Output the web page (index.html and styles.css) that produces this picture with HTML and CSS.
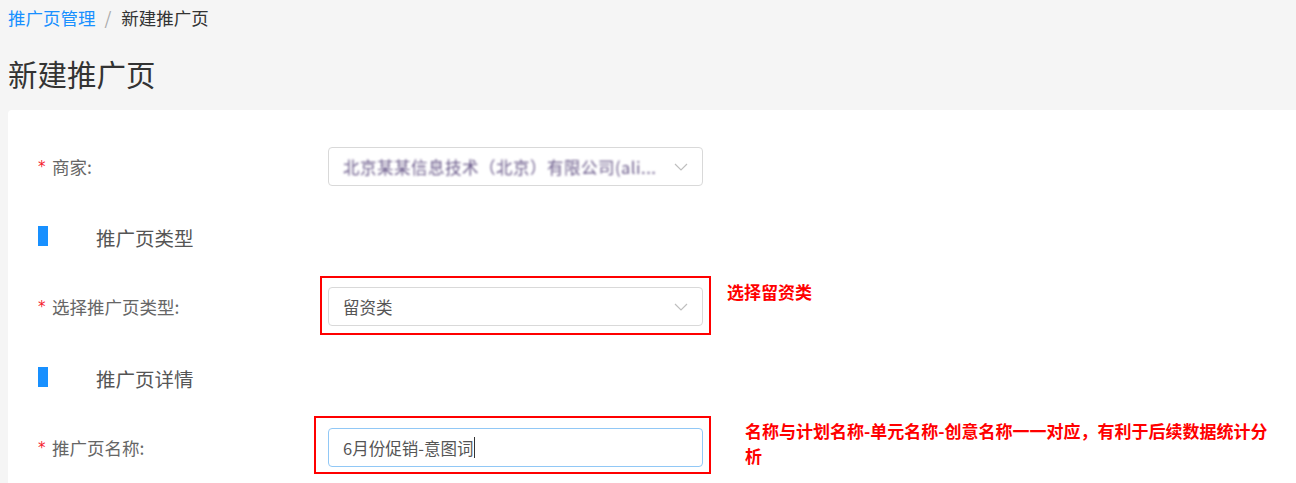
FILE: index.html
```html
<!DOCTYPE html>
<html lang="zh-CN">
<head>
  <meta charset="UTF-8">
  <title>新建推广页</title>
  <link rel="stylesheet" href="styles.css">
</head>
<body>

  <div class="breadcrumb">
    <a class="crumb-link">推广页管理</a>
    <span class="crumb-sep">/</span>
    <span class="crumb-current">新建推广页</span>
  </div>

  <h1 class="page-title">新建推广页</h1>

  <div class="card">

    <div class="form-row">
      <label class="form-label"><span class="req">*</span>商家:</label>
      <div class="control">
        <div class="select">
          <span class="select-value masked">北京某某信息技术（北京）有限公司(ali...</span>
          <svg class="arrow" width="14" height="8" viewBox="0 0 14 8"><path d="M1 1 L7 7 L13 1" fill="none" stroke="#bfbfbf" stroke-width="1.2"/></svg>
        </div>
      </div>
    </div>

    <div class="section-title"><span class="section-bar"></span><span class="section-text">推广页类型</span></div>

    <div class="form-row">
      <label class="form-label"><span class="req">*</span>选择推广页类型:</label>
      <div class="control">
        <div class="select">
          <span class="select-value">留资类</span>
          <svg class="arrow" width="14" height="8" viewBox="0 0 14 8"><path d="M1 1 L7 7 L13 1" fill="none" stroke="#bfbfbf" stroke-width="1.2"/></svg>
        </div>
        <div class="mark mark-type"></div>
        <div class="note note-type">选择留资类</div>
      </div>
    </div>

    <div class="section-title"><span class="section-bar"></span><span class="section-text">推广页详情</span></div>

    <div class="form-row">
      <label class="form-label"><span class="req">*</span>推广页名称:</label>
      <div class="control">
        <div class="input focused"><span class="input-value">6月份促销-意图词</span><span class="caret"></span></div>
        <div class="mark mark-name"></div>
        <div class="note note-name">名称与计划名称-单元名称-创意名称一一对应，有利于后续数据统计分析</div>
      </div>
    </div>

  </div>

</body>
</html>
```

FILE: styles.css
```css
html, body {
  margin: 0;
  padding: 0;
  height: 100%;
  overflow: hidden;
}
body {
  font-family: "Noto Sans CJK SC", "Noto Sans", sans-serif;
  background: #f5f5f5;
  color: #333;
}

.breadcrumb {
  padding: 8px 8px 0;
  font-size: 17.5px;
  line-height: 20px;
  height: 20px;
}
.crumb-link {
  color: #1890ff;
}
.crumb-sep {
  color: #aaa;
  margin: 0 6px 0 5px;
}
.crumb-current {
  color: #333;
}

.page-title {
  margin: 0;
  padding: 25px 8px 0;
  font-size: 29.5px;
  font-weight: normal;
  line-height: 40px;
  height: 40px;
  color: #333;
}

.card {
  margin: 17px 0 0 8px;
  padding: 37px 0 0 30px;
  background: #fff;
  border-radius: 4px 0 0 0;
  height: 336px;
}

.form-row {
  display: flex;
  align-items: center;
  height: 39px;
  margin-bottom: 41px;
}
.form-row:first-child {
  margin-bottom: 40px;
}
.form-row:last-child {
  margin-bottom: 0;
}
.form-label {
  width: 290px;
  font-size: 17.5px;
  color: #666;
  display: flex;
  align-items: center;
}
.req {
  color: #f5222d;
  font-size: 15px;
  width: 14px;
  font-family: "DejaVu Sans", sans-serif;
}

.control {
  position: relative;
  width: 375px;
  height: 39px;
}
.select, .input {
  box-sizing: border-box;
  height: 39px;
  border: 1px solid #d9d9d9;
  border-radius: 4px;
  display: flex;
  align-items: center;
  padding: 0 14px;
  font-size: 16.5px;
  color: #555;
  background: #fff;
}
.select-value {
  flex: 1;
  white-space: nowrap;
  overflow: hidden;
}
.masked {
  color: #6a5a8a;
  filter: blur(0.8px);
  letter-spacing: 0.5px;
}
.arrow {
  margin-left: 8px;
}
.input.focused {
  border-color: #91c8f6;
}
.caret {
  display: inline-block;
  width: 1px;
  height: 21px;
  background: #333;
  margin-left: 1px;
}

.section-title {
  display: flex;
  align-items: center;
  height: 20px;
  line-height: 20px;
  margin-bottom: 41px;
  font-size: 19.5px;
  color: #555;
}
.section-bar {
  width: 10px;
  height: 20px;
  background: #1890ff;
  margin-right: 48px;
}
.section-text {
  padding-top: 3px;
}

.mark {
  position: absolute;
  border: 2px solid #ff0000;
  box-sizing: border-box;
}
.mark-type {
  left: -8px;
  top: -11px;
  width: 391px;
  height: 59px;
}
.mark-name {
  left: -14px;
  top: -12px;
  width: 397px;
  height: 58px;
}
.note {
  position: absolute;
  color: #ff0000;
  font-weight: bold;
  font-size: 17px;
  line-height: 25px;
}
.note-type {
  left: 399px;
  top: -8px;
  white-space: nowrap;
}
.note-name {
  left: 417px;
  top: -10px;
  width: 534px;
}
```
